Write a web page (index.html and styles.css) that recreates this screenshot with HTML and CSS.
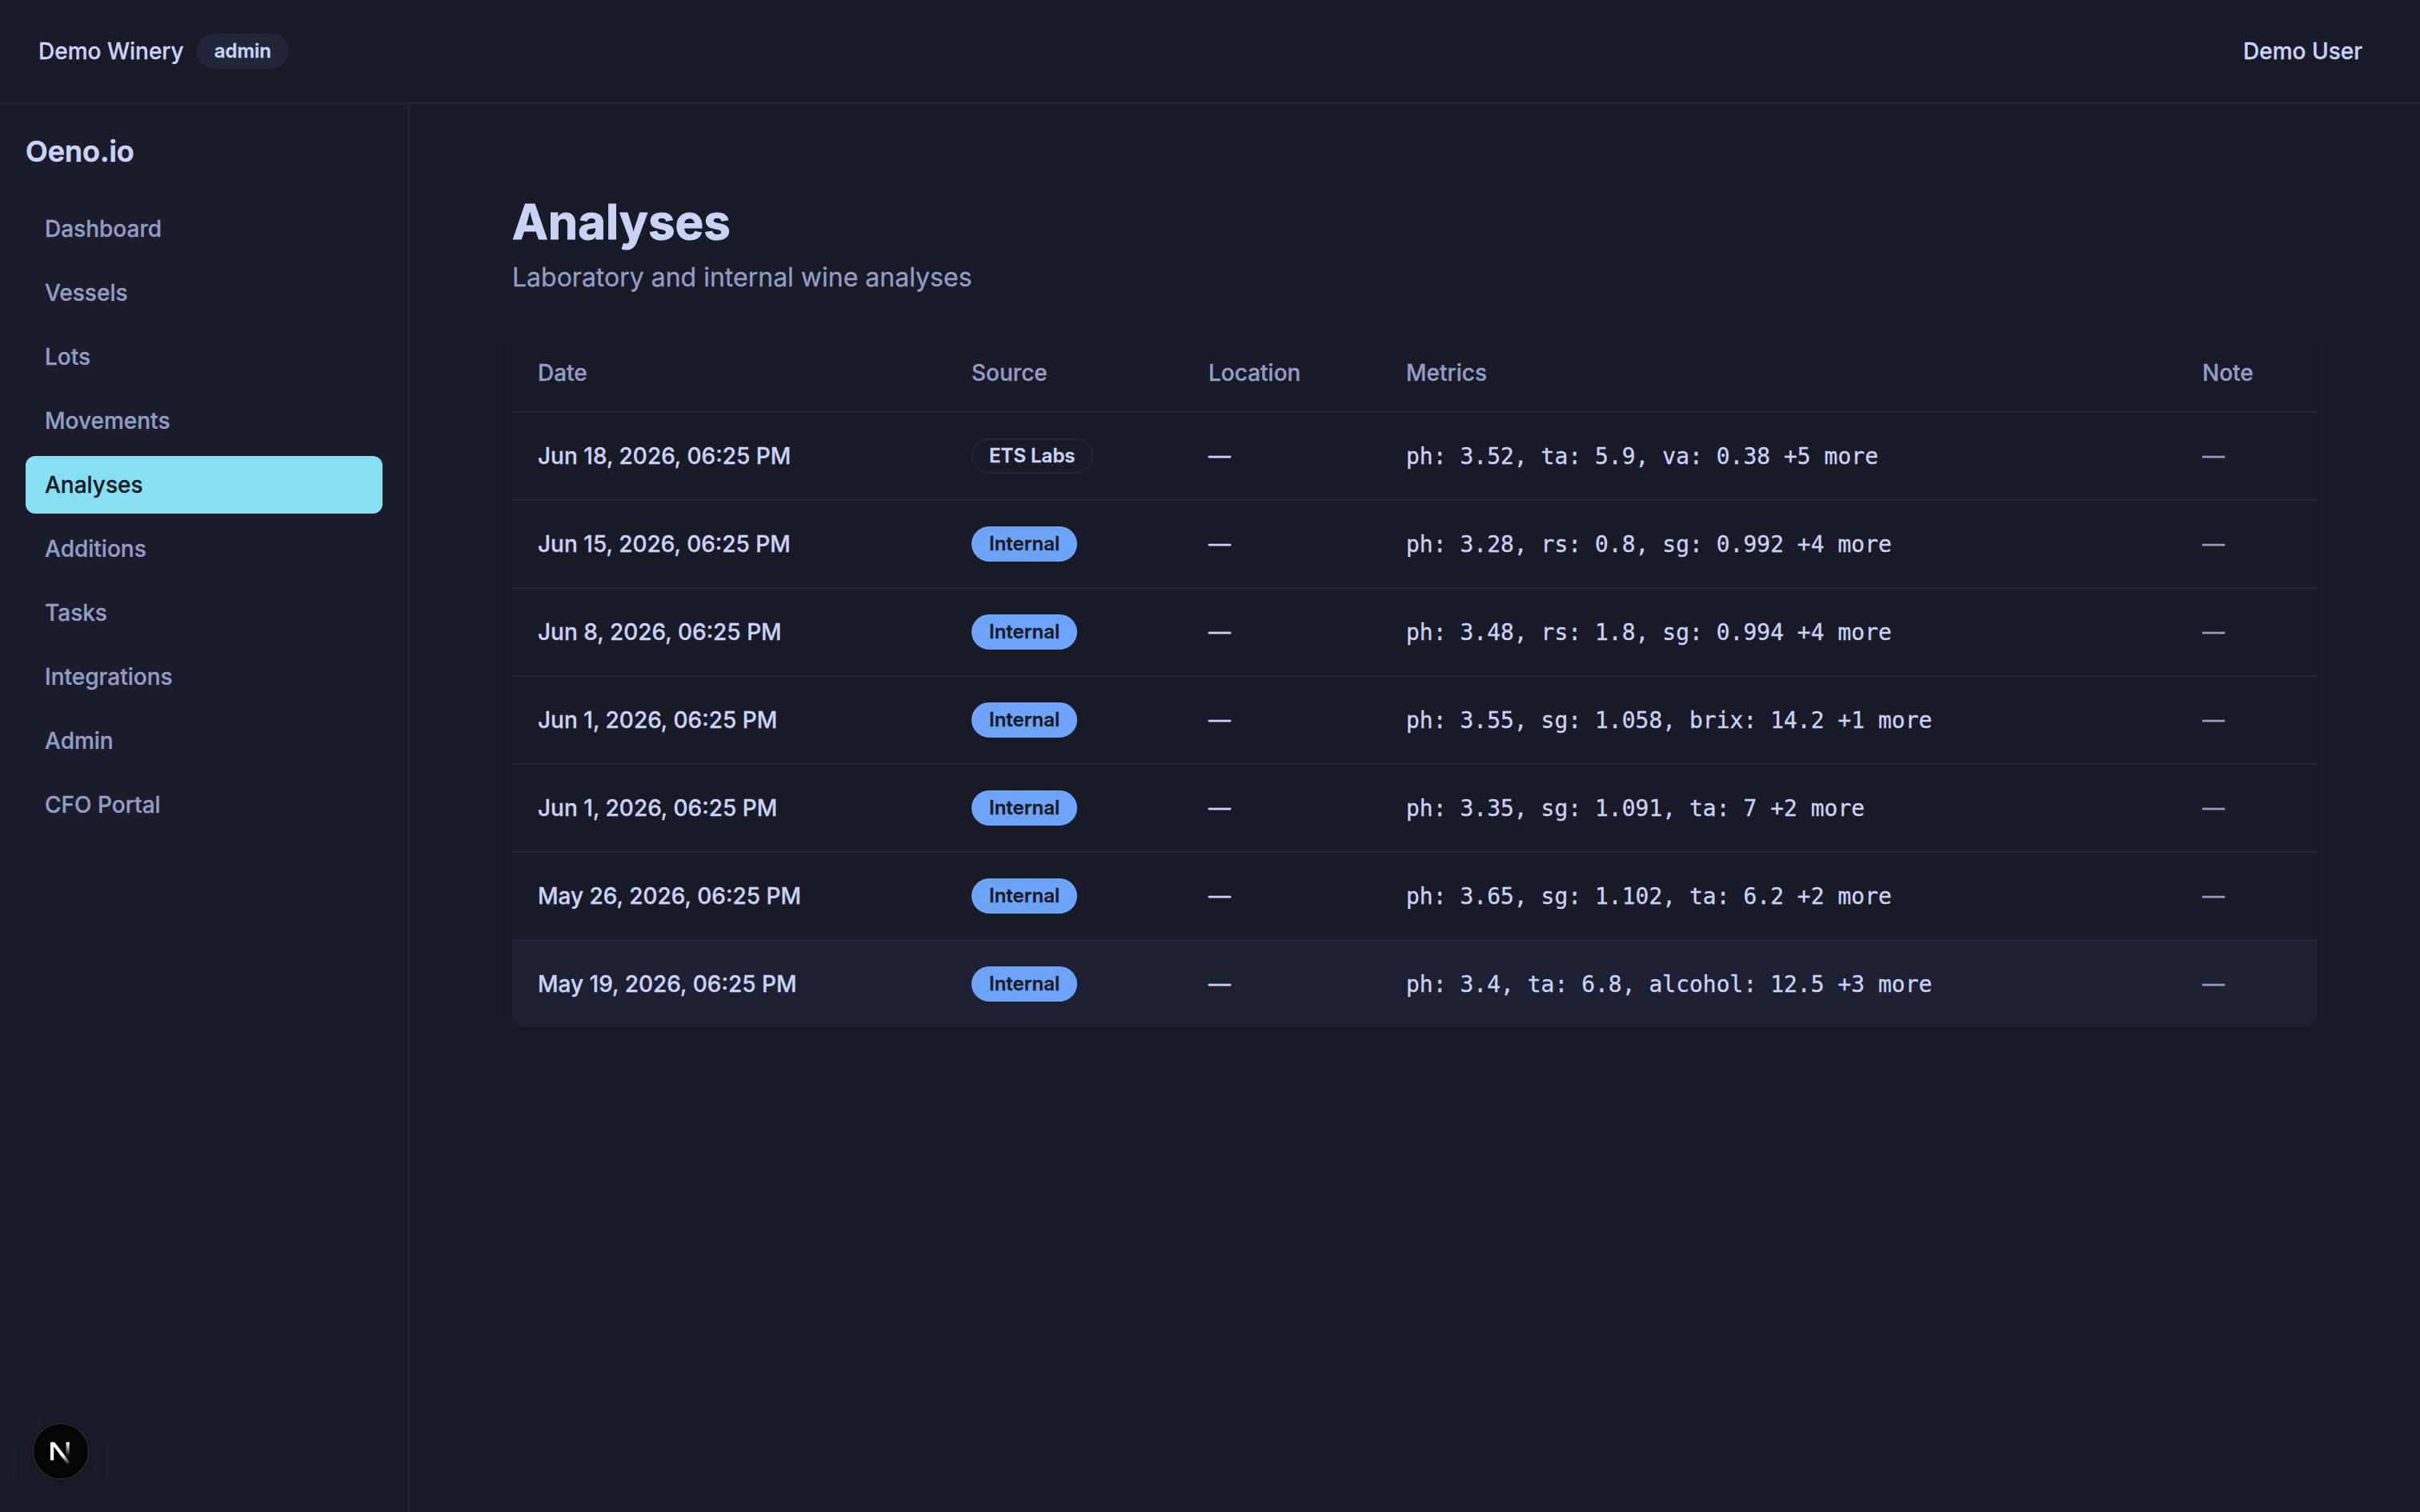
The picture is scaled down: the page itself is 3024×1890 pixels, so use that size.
FILE: index.html
```html
<!DOCTYPE html>
<html lang="en">
<head>
    <meta charset="UTF-8">
    <meta name="viewport" content="width=device-width, initial-scale=1.0">
    <title>Analyses - Oeno.io</title>
    <link rel="stylesheet" href="styles.css">
</head>
<body>

    <!-- Top bar -->
    <header class="topbar">
        <div class="topbar-left">
            <span class="winery-name">Demo Winery</span>
            <span class="badge badge-role">admin</span>
        </div>
        <button class="user-menu" type="button">Demo User</button>
    </header>

    <div class="layout">
        <!-- Sidebar -->
        <aside class="sidebar">
            <div class="brand">Oeno.io</div>
            <nav class="side-nav">
                <a href="#">Dashboard</a>
                <a href="#">Vessels</a>
                <a href="#">Lots</a>
                <a href="#">Movements</a>
                <a href="#" class="active">Analyses</a>
                <a href="#">Additions</a>
                <a href="#">Tasks</a>
                <a href="#">Integrations</a>
                <a href="#">Admin</a>
                <a href="#">CFO Portal</a>
            </nav>
        </aside>

        <!-- Page content -->
        <main class="content">
            <h1>Analyses</h1>
            <p class="subtitle">Laboratory and internal wine analyses</p>

            <div class="table-card">
                <table>
                    <colgroup>
                        <col class="col-date">
                        <col class="col-source">
                        <col class="col-location">
                        <col class="col-metrics">
                        <col class="col-note">
                    </colgroup>
                    <thead>
                        <tr>
                            <th>Date</th>
                            <th>Source</th>
                            <th>Location</th>
                            <th>Metrics</th>
                            <th>Note</th>
                        </tr>
                    </thead>
                    <tbody>
                        <tr>
                            <td class="date">Jun 18, 2026, 06:25 PM</td>
                            <td><span class="badge badge-outline">ETS Labs</span></td>
                            <td>—</td>
                            <td class="metrics">ph: 3.52, ta: 5.9, va: 0.38 +5 more</td>
                            <td class="note">—</td>
                        </tr>
                        <tr>
                            <td class="date">Jun 15, 2026, 06:25 PM</td>
                            <td><span class="badge badge-internal">Internal</span></td>
                            <td>—</td>
                            <td class="metrics">ph: 3.28, rs: 0.8, sg: 0.992 +4 more</td>
                            <td class="note">—</td>
                        </tr>
                        <tr>
                            <td class="date">Jun 8, 2026, 06:25 PM</td>
                            <td><span class="badge badge-internal">Internal</span></td>
                            <td>—</td>
                            <td class="metrics">ph: 3.48, rs: 1.8, sg: 0.994 +4 more</td>
                            <td class="note">—</td>
                        </tr>
                        <tr>
                            <td class="date">Jun 1, 2026, 06:25 PM</td>
                            <td><span class="badge badge-internal">Internal</span></td>
                            <td>—</td>
                            <td class="metrics">ph: 3.55, sg: 1.058, brix: 14.2 +1 more</td>
                            <td class="note">—</td>
                        </tr>
                        <tr>
                            <td class="date">Jun 1, 2026, 06:25 PM</td>
                            <td><span class="badge badge-internal">Internal</span></td>
                            <td>—</td>
                            <td class="metrics">ph: 3.35, sg: 1.091, ta: 7 +2 more</td>
                            <td class="note">—</td>
                        </tr>
                        <tr>
                            <td class="date">May 26, 2026, 06:25 PM</td>
                            <td><span class="badge badge-internal">Internal</span></td>
                            <td>—</td>
                            <td class="metrics">ph: 3.65, sg: 1.102, ta: 6.2 +2 more</td>
                            <td class="note">—</td>
                        </tr>
                        <tr class="hovered">
                            <td class="date">May 19, 2026, 06:25 PM</td>
                            <td><span class="badge badge-internal">Internal</span></td>
                            <td>—</td>
                            <td class="metrics">ph: 3.4, ta: 6.8, alcohol: 12.5 +3 more</td>
                            <td class="note">—</td>
                        </tr>
                    </tbody>
                </table>
            </div>
        </main>
    </div>

    <!-- Dev tools button -->
    <button class="dev-button" type="button" aria-label="Open dev tools">
        <svg width="72" height="72" viewBox="0 0 72 72" fill="none">
            <defs>
                <linearGradient id="fadeDiagonal" x1="38" y1="41" x2="47" y2="52.5" gradientUnits="userSpaceOnUse">
                    <stop stop-color="#fff"/>
                    <stop offset="1" stop-color="#fff" stop-opacity="0"/>
                </linearGradient>
                <linearGradient id="fadeStem" x1="44" y1="25" x2="44" y2="42" gradientUnits="userSpaceOnUse">
                    <stop stop-color="#fff"/>
                    <stop offset="1" stop-color="#fff" stop-opacity="0"/>
                </linearGradient>
            </defs>
            <path d="M23 24.7H28.2L47.8 50.2L44.6 52.8L27.2 30.2V47.3H23Z" fill="url(#fadeDiagonal)"/>
            <path d="M42.6 24.7H46.8V42H42.6Z" fill="url(#fadeStem)"/>
        </svg>
    </button>

</body>
</html>
```

FILE: styles.css
```css
* {
    box-sizing: border-box;
}

body {
    margin: 0;
    min-height: 100vh;
    display: flex;
    flex-direction: column;
    font-family: Inter, "Liberation Sans", sans-serif;
    font-size: 28px;
    line-height: 40px;
    background-color: #191a28;
    color: #cad3f5;
    -webkit-text-stroke: 0.3px currentColor; /* slightly heavier text */
}

button {
    font: inherit;
    color: inherit;
    background: none;
    border: none;
    cursor: pointer;
}

/* Top bar */
.topbar {
    height: 130px;
    padding: 0 48px;
    display: flex;
    align-items: center;
    justify-content: space-between;
    border-bottom: 2px solid #21263a;
}

.topbar-left {
    display: flex;
    align-items: center;
    gap: 16px;
}

.winery-name {
    font-weight: 500;
}

.user-menu {
    padding: 16px 24px;
    font-weight: 500;
}

/* Badges */
.badge {
    display: inline-flex;
    align-items: center;
    height: 44px;
    padding: 0 20px;
    border: 2px solid transparent;
    border-radius: 22px;
    font-size: 24px;
    line-height: 32px;
    font-weight: 600;
    vertical-align: middle;
}

.badge-role {
    background-color: #21263a;
    border-color: #21263a;
}

.badge-outline {
    border-color: #21263a;
}

.badge-internal {
    background-color: #6ea3fa;
    border-color: #6ea3fa;
    color: #191a28;
}

.layout {
    flex: 1;
    display: flex;
}

/* Sidebar */
.sidebar {
    width: 512px;
    padding: 31px 32px;
    background-color: #1b1c2b;
    border-right: 2px solid #21263a;
}

.brand {
    margin-bottom: 33px;
    font-size: 36px;
    line-height: 56px;
    font-weight: 600;
    -webkit-text-stroke-width: 0.6px;
}

.side-nav {
    display: flex;
    flex-direction: column;
    gap: 8px;
}

.side-nav a {
    padding: 16px 24px;
    border-radius: 12px;
    color: #939dc3;
    font-weight: 500;
    text-decoration: none;
    -webkit-text-stroke-color: currentColor;
}

.side-nav a.active {
    background-color: #87dff3;
    color: #191a28;
}

/* Content */
.content {
    flex: 1;
    padding: 111px 128px;
}

h1 {
    margin: 0;
    font-size: 60px;
    line-height: 72px;
    font-weight: 700;
    -webkit-text-stroke-width: 1px;
}

.subtitle {
    margin: 10px 0 45px;
    font-size: 32px;
    line-height: 48px;
    color: #939dc3;
}

/* Table */
.table-card {
    border-radius: 16px;
    overflow: hidden;
    box-shadow: 0 4px 12px rgba(0, 0, 0, 0.15);
}

table {
    width: 100%;
    table-layout: fixed;
    border-collapse: separate;
    border-spacing: 0;
}

.col-date { width: 542px; }
.col-source { width: 296px; }
.col-location { width: 247px; }
.col-metrics { width: 995px; }
.col-note { width: 176px; }

th {
    height: 100px;
    padding: 2px 32px 0;
    text-align: left;
    font-weight: 500;
    color: #939dc3;
    border-bottom: 2px solid #21263a;
}

td {
    height: 110px;
    padding: 0 32px;
    border-bottom: 2px solid #21263a;
}

tr:last-child td {
    height: 108px;
    border-bottom: none;
}

.hovered td {
    background-color: #1d2032;
}

.date {
    font-weight: 500;
}

td.metrics {
    padding-top: 2px;
    font-family: "DejaVu Sans Mono", monospace;
}

.note {
    color: #939dc3;
}

/* Round button in the corner */
.dev-button {
    position: fixed;
    left: 40px;
    bottom: 40px;
    width: 72px;
    height: 72px;
    padding: 0;
    border-radius: 50%;
    background-color: #040407;
    box-shadow: inset 0 0 0 2px #28282b, 0 0 0 2px #17171a, 0 16px 32px -8px rgba(0, 0, 0, 0.24);
}

.dev-button svg {
    display: block;
}
```
